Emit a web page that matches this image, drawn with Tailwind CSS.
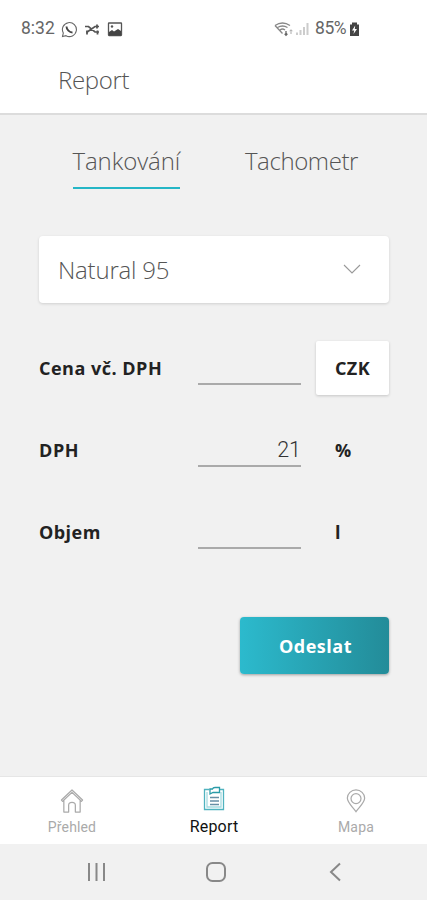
<!DOCTYPE html>
<html lang="cs">
<head>
<meta charset="utf-8">
<meta name="viewport" content="width=device-width, initial-scale=1">
<title>Report</title>
<script src="https://cdn.jsdelivr.net/npm/@tailwindcss/browser@4"></script>
</head>
<body class="bg-[#f1f1f1] font-['Open_Sans','Noto_Sans',sans-serif] text-[#555]">
<div class="flex h-[900px] w-[427px] flex-col overflow-hidden">
  <header class="h-[115px] shrink-0 border-b-2 border-[#dcdcdc] bg-white">
    <div class="flex h-[58px] items-center pl-[21px] pr-[67px] font-['Roboto',sans-serif] text-[#666]">
      <span class="w-[34px] whitespace-nowrap text-[17.5px] leading-none">8:32</span>
      <svg class="ml-[6px] size-[17px]" viewBox="0 0 17 17" fill="none" stroke="#666" stroke-width="1.100"><path d="M1.500 15.500 2.300 12A7 7 0 1 1 5 14.700Z"/><path d="M5.500 5.500c0 3 3 6 6 6" stroke="#444" stroke-width="1.900"/></svg>
      <svg class="ml-[6px] h-[12px] w-[17px]" viewBox="0 0 17 12" fill="none" stroke="#555" stroke-width="1.700"><path d="M1 3.500h3.500l6.500 5.500h4M2.500 9.500l8.500-6h4"/><path d="M13 1.500v4M13.500 7.500v4M3 7.500v4" stroke-width="1.800"/></svg>
      <svg class="ml-[6px] h-[15px] w-[16px]" viewBox="0 0 16 15"><rect x="1.500" y="1" width="13" height="12.500" rx=".5" fill="none" stroke="#555" stroke-width="1.300"/><path d="M2 10l3-2 2 1.500L11 7l3 2v4.500H2Z" fill="#444"/><circle cx="5" cy="4.500" r="1.200" fill="#555"/></svg>
      <svg class="ml-auto h-[17px] w-[20px]" viewBox="0 0 20 17" fill="none" stroke="#888" stroke-width="1.300"><path d="M1 4.500Q8.500-.5 16 4.500M3.500 6.500q5-3 10 0M6 9q2.500-2 5 0M1 4.500l7.500 8"/><path d="M12 10v4M10.700 12.700 12 14.200l1.400-1.500" stroke="#666"/><path d="M17 13v-4M15.700 10.200 17 8.700l1.400 1.500" stroke="#aaa" stroke-width="1"/></svg>
      <svg class="ml-[1px] h-[14px] w-[15px]" viewBox="0 0 15 14" fill="#ccc"><path d="M1 10.500h2V13H1zM4.500 8h2v5h-2zM8 5h2v8H8zM11.500 1h2v12h-2z"/></svg>
      <span class="ml-[5px] w-[33px] whitespace-nowrap text-[17.5px] leading-none tracking-[-0.400px]">85%</span>
      <svg class="ml-[1px] h-[15px] w-[11px]" viewBox="0 0 11 15"><path d="M1 2.500h2V.500h5v2h2V14H1Z" fill="#444"/><path d="M6.200 3.500 3 8.500h2.200L4.500 12l3.500-5H5.800Z" fill="#fff"/></svg>
    </div>
    <h1 class="pl-[58px] pt-[6px] text-[24px] font-light leading-[32px] tracking-[-0.350px]">Report</h1>
  </header>

  <main class="flex flex-1 flex-col px-[38px]">
    <nav class="flex h-[74px] items-end justify-between pl-[34.500px] pr-[31px] text-[24px] font-light leading-[30px]">
      <span class="h-[43px] border-b-2 border-[#25b6c6] tracking-[-0.100px]">Tankování</span>
      <span class="h-[43px] tracking-[-0.400px]">Tachometr</span>
    </nav>
    <div class="ml-px mt-[47px] flex h-[66.500px] items-center justify-between rounded-[4px] bg-white pl-[19px] pr-[28px] shadow-[0_1px_3px_rgba(0,0,0,0.14)]">
      <span class="pt-px text-[24px] font-light leading-[32px] tracking-[-0.200px]">Natural 95</span>
      <svg class="h-[10px] w-[18px]" viewBox="0 0 18 10" fill="none" stroke="#999" stroke-width="1.100"><path d="m1 1 8 8 8-8"/></svg>
    </div>
    <div class="mt-[24px] grid grid-cols-[159.500px_103.500px_15px_73px] text-[18px] font-bold leading-[24px] text-[#222]">
      <div class="col-span-4 grid h-[82px] grid-cols-subgrid items-center">
        <span class="pl-px tracking-[0.500px]">Cena vč. DPH</span><span class="h-[34px] border-b-2 border-[#aaa]"></span><span></span>
        <span class="flex h-[54px] items-center rounded-[2px] bg-white pl-[19px] tracking-[0.400px] shadow-[0_1px_3px_rgba(0,0,0,0.18)]">CZK</span>
      </div>
      <div class="col-span-4 grid h-[82px] grid-cols-subgrid items-center">
        <span class="pl-px tracking-[0.600px]">DPH</span><span class="h-[34px] border-b-2 border-[#aaa] pt-[5px] text-right font-['Roboto',sans-serif] text-[21.500px] font-light text-[#333]">21</span><span></span><span class="pl-[19px]">%</span>
      </div>
      <div class="col-span-4 grid h-[82px] grid-cols-subgrid items-center">
        <span class="pl-px tracking-[0.450px]">Objem</span><span class="h-[34px] border-b-2 border-[#aaa]"></span><span></span><span class="pl-[19px]">l</span>
      </div>
    </div>
    <button class="mt-[44.500px] h-[57px] w-[149px] self-end rounded-[4px] bg-linear-to-r from-[#2cbacd] to-[#238c99] pl-[2px] pt-[2px] text-[18px] font-bold tracking-[0.500px] text-white shadow-[0_1px_3px_rgba(0,0,0,0.35)]">Odeslat</button>
  </main>

  <nav class="grid h-[68px] shrink-0 grid-cols-3 border-t border-[#e6e6e6] bg-white pl-px font-['Roboto',sans-serif] text-[14px] leading-[18px] text-[#aaa]">
    <div class="flex flex-col items-center pt-[12px]">
      <svg class="h-[24px] w-[24px]" viewBox="0 0 24 25" fill="none" stroke="#aaa" stroke-width="1.300" stroke-linejoin="round"><path d="M1 11.500 12 1l11 10.500-1.200 1.300L12 3.500 2.200 12.800ZM3.500 12v12h5v-7q0-3 3.500-3t3.500 3v7h5V12"/></svg>
      <span class="mt-[5px] tracking-[0.150px]">Přehled</span>
    </div>
    <div class="flex flex-col items-center pt-[9px] text-[#111]">
      <svg class="h-[25px] w-[22px]" viewBox="0 0 22 25" fill="none" stroke="#2a9ba8" stroke-width="1.300"><path d="M6.500 3.500H1.500v20h19v-20H16" stroke="#4fb3bf"/><path d="M18 6v15H4V6" stroke="#a5dbe1"/><path d="M7 8V3h2.500Q10 1.500 12 1.500h4.500V6.500H10L7 8Z"/><path d="M7 11.500h9M7 15h9M7 18.500h9" stroke="#668fa5"/></svg>
      <span class="mt-[7px] text-[16px] leading-[18px] tracking-[0.200px]">Report</span>
    </div>
    <div class="flex flex-col items-center pt-[12px]">
      <svg class="h-[24px] w-[20px]" viewBox="0 0 20 25" fill="none" stroke="#aaa" stroke-width="1.300"><path d="M10 23.500C6.500 18.500 1 14.500 1 9.500a9 8.500 0 0 1 18 0c0 5-5.500 9-9 14Z"/><circle cx="10" cy="10" r="5.200"/></svg>
      <span class="mt-[5px] tracking-[0.200px]">Mapa</span>
    </div>
  </nav>
  <div class="flex h-[56px] shrink-0 items-center pl-[86.500px]">
    <svg class="h-[20px] w-[19px]" viewBox="0 0 19 20" stroke="#888" stroke-width="2"><path d="M2 1v18M9.500 1v18M17 1v18"/></svg>
    <svg class="ml-[100px] size-[20px]" viewBox="0 0 20 20" fill="none" stroke="#888" stroke-width="2"><rect x="1" y="1" width="18" height="18" rx="5.500"/></svg>
    <svg class="ml-[103.500px] h-[20px] w-[12px]" viewBox="0 0 12 20" fill="none" stroke="#888" stroke-width="2"><path d="m11 1.500-9 8.500 9 8.500"/></svg>
  </div>
</div>
</body>
</html>
